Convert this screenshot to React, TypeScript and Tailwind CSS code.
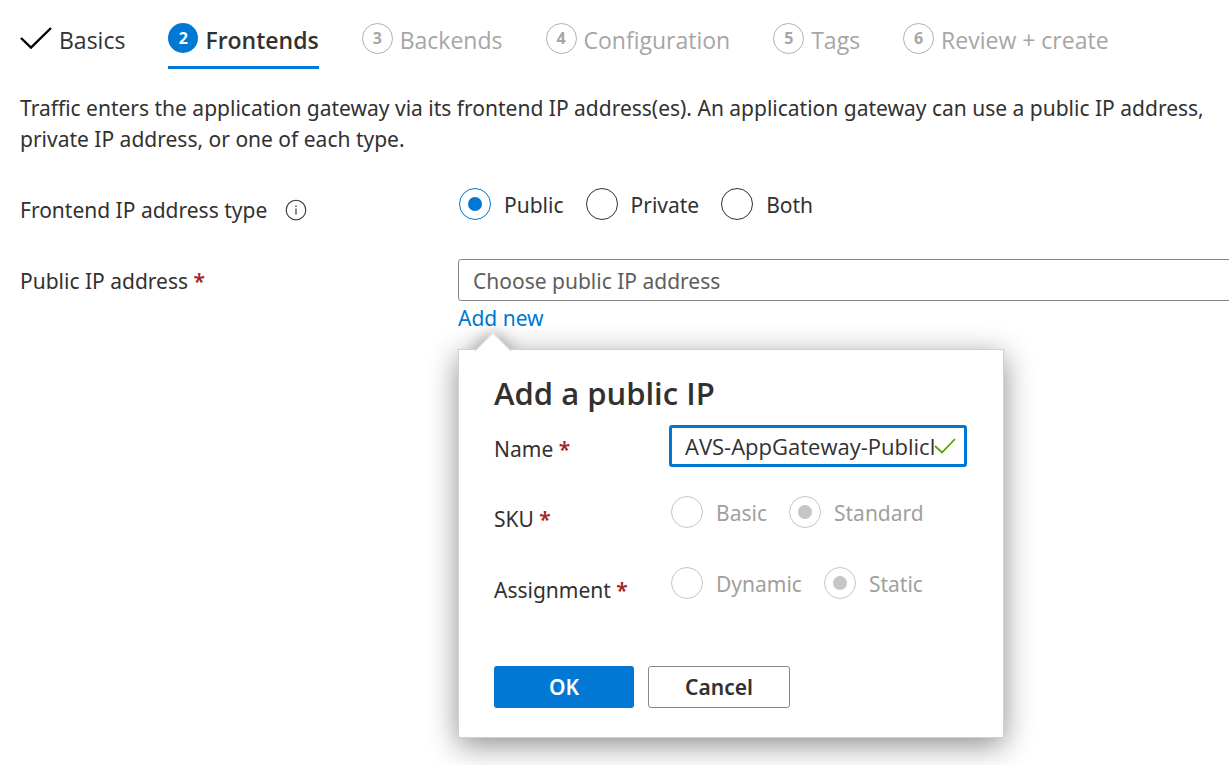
import { useState } from "react";
import type { ReactNode } from "react";

const upcomingSteps = [
  { number: 3, label: "Backends" },
  { number: 4, label: "Configuration" },
  { number: 5, label: "Tags" },
  { number: 6, label: "Review + create" },
];

function Required() {
  return <span className="font-semibold text-[#a4262c]">*</span>;
}

interface RadioProps {
  name: string;
  label: string;
  checked: boolean;
  disabled?: boolean;
  onSelect?: () => void;
}

function Radio({ name, label, checked, disabled = false, onSelect }: RadioProps) {
  return (
    <label className={disabled ? "flex items-center gap-[13px] text-[#a19f9d]" : "flex items-center gap-[13px]"}>
      <input
        type="radio"
        name={name}
        checked={checked}
        disabled={disabled}
        onChange={onSelect}
        className="grid size-8 shrink-0 appearance-none place-content-center rounded-full border border-[#323130] before:size-[14px] before:rounded-full before:content-[''] checked:border-[#0078d4] checked:before:bg-[#0078d4] disabled:border-[#c8c6c4] disabled:checked:before:bg-[#c8c6c4]"
      />
      <span className="pt-[2px]">{label}</span>
    </label>
  );
}

function DialogRow({ label, children }: { label: string; children: ReactNode }) {
  return (
    <div role="radiogroup" aria-label={label} className="flex h-8">
      <span className="w-[177px] shrink-0 pt-[8px]">
        {label} <Required />
      </span>
      <div className="flex items-center gap-[22px]">{children}</div>
    </div>
  );
}

function AddPublicIp() {
  const [name, setName] = useState("AVS-AppGateway-PublicIP");
  return (
    <div className="absolute top-[90px] left-0 w-[546px]">
      <div className="absolute -top-[11px] left-[22px] size-[26px] rotate-45 bg-white shadow-[0_0_18px_rgba(0,0,0,0.4)]" />
      <div
        role="dialog"
        aria-labelledby="dialog-title"
        className="relative border border-[#d2d0ce] bg-white pt-[23px] pr-[36px] pb-[29px] pl-[35px] shadow-[0_7px_28px_rgba(0,0,0,0.45)]"
      >
        <h2
          id="dialog-title"
          className="font-['Open_Sans','Noto_Sans',sans-serif] text-[31px] leading-[40px] font-semibold"
        >
          Add a public IP
        </h2>
        <div className="mt-[12px] flex h-[42px]">
          <label htmlFor="ip-name" className="w-[175px] shrink-0 pt-[9px]">
            Name <Required />
          </label>
          <div className="flex grow items-center rounded-[3px] border-[3px] border-[#0078d4] pr-[8px] pl-[13px]">
            <input
              id="ip-name"
              type="text"
              value={name}
              onChange={(event) => setName(event.target.value)}
              className="h-full w-0 grow bg-transparent font-['Open_Sans','Noto_Sans',sans-serif] text-[22px] outline-none"
            />
            <svg viewBox="0 0 22 16" className="h-4 w-[22px] shrink-0" fill="none" stroke="#57a300" strokeWidth="1.8">
              <path d="M1 8l7 6.500L21 1" />
            </svg>
          </div>
        </div>
        <div className="mt-[29px] flex flex-col gap-[39px]">
          <DialogRow label="SKU">
            <Radio name="sku" label="Basic" checked={false} disabled />
            <Radio name="sku" label="Standard" checked disabled />
          </DialogRow>
          <DialogRow label="Assignment">
            <Radio name="assignment" label="Dynamic" checked={false} disabled />
            <Radio name="assignment" label="Static" checked disabled />
          </DialogRow>
        </div>
        <div className="mt-[67px] flex gap-[14px]">
          <button type="button" className="h-[42px] w-[140px] rounded-[3px] bg-[#0078d4] font-semibold text-white">
            OK
          </button>
          <button type="button" className="h-[42px] w-[142px] rounded-[3px] border border-[#8a8886] bg-white font-semibold">
            Cancel
          </button>
        </div>
      </div>
      <div className="absolute -top-[11px] left-[22px] size-[26px] rotate-45 border-t border-l border-[#e1dfdd] bg-white" />
    </div>
  );
}

export default function App() {
  const [ipType, setIpType] = useState("Public");
  return (
    <main className="min-h-screen overflow-hidden bg-white pl-5 font-['Noto_Sans','Open_Sans',sans-serif] text-[21px] leading-[31px] text-[#323130]">
      <nav
        aria-label="Wizard steps"
        className="flex gap-[43px] pt-[8px] font-['Open_Sans','Noto_Sans',sans-serif] text-[23px] whitespace-nowrap"
      >
        <a href="#basics" className="flex h-[61px] items-start gap-[7px]">
          <svg viewBox="0 0 32 24" className="mt-[18px] h-6 w-8" fill="none" stroke="#000000" strokeWidth="2.400">
            <path d="M1 12l10 9.500L31 2" />
          </svg>
          <span className="pt-[17px]">Basics</span>
        </a>
        <a
          href="#frontends"
          aria-current="step"
          className="flex h-[61px] items-start gap-[7px] border-b-[3px] border-[#0078d4] font-semibold"
        >
          <span className="mt-[15px] flex size-[30px] items-center justify-center rounded-full bg-[#0078d4] text-[16px] font-bold text-white">
            2
          </span>
          <span className="pt-[17px]">Frontends</span>
        </a>
        {upcomingSteps.map((step) => (
          <a key={step.number} href={`#step-${step.number}`} className="flex h-[61px] items-start gap-[7px] text-[#a6a6a6]">
            <span className="mt-[15px] flex size-[31px] items-center justify-center rounded-full border border-[#b3b0ad] text-[16px] font-bold">
              {step.number}
            </span>
            <span className="pt-[17px]">{step.label}</span>
          </a>
        ))}
      </nav>

      <p className="mt-[24px]">
        Traffic enters the application gateway via its frontend IP address(es). An application gateway can use a public IP
        address, private IP address, or one of each type.
      </p>

      <div role="radiogroup" aria-labelledby="ip-type-label" className="mt-[33px] flex h-8">
        <div className="flex w-[439px] shrink-0 items-center gap-[18px] pt-[12px]">
          <span id="ip-type-label">Frontend IP address type</span>
          <svg viewBox="0 0 22 22" className="size-[22px]" fill="none" stroke="#323130">
            <circle cx="11" cy="11" r="9.800" strokeWidth="1.100" />
            <path d="M11 9.500v6M11 6.500v1.500" strokeWidth="1.200" />
          </svg>
        </div>
        <div className="flex gap-[22px]">
          {["Public", "Private", "Both"].map((type) => (
            <Radio key={type} name="ip-type" label={type} checked={ipType === type} onSelect={() => setIpType(type)} />
          ))}
        </div>
      </div>

      <div className="mt-[39px] flex">
        <label htmlFor="public-ip" className="w-[438px] shrink-0 pt-[7px]">
          Public IP address <Required />
        </label>
        <div className="relative -mr-10 grow">
          <select
            id="public-ip"
            className="block h-[42px] w-full appearance-none rounded-[3px] border border-[#8a8886] bg-white px-[14px] pt-[2px] text-[#605e5c]"
          >
            <option>Choose public IP address</option>
          </select>
          <a href="#add-new" className="mt-[2px] inline-block text-[#0078d4]">
            Add new
          </a>
          <AddPublicIp />
        </div>
      </div>
    </main>
  );
}
